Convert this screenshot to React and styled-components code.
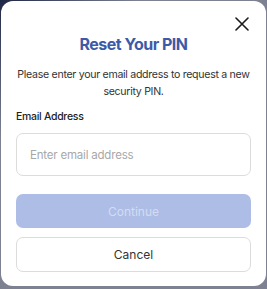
import React from "react";
import styled, { createGlobalStyle } from "styled-components";

const GlobalStyle = createGlobalStyle`
  html, body {
    margin: 0;
    padding: 0;
    background: #7e8192;
  }
  body {
    font-family: Inter, "Open Sans", sans-serif;
  }
`;

export default function App() {
    return (
        <>
            <GlobalStyle />
            <Backdrop>
                <Modal>
                    <CloseButton aria-label="Close">
                        <svg width="14" height="14" viewBox="0 0 14 14">
                            <path d="M1 1L13 13M13 1L1 13" stroke="#1a1a1a" strokeWidth="1.6" strokeLinecap="round" />
                        </svg>
                    </CloseButton>
                    <Title>Reset Your PIN</Title>
                    <Description>
                        Please enter your email address to request a new security PIN.
                    </Description>
                    <Field>
                        <Label>Email Address</Label>
                        <Input placeholder="Enter email address" />
                    </Field>
                    <Actions>
                        <Button primary disabled>Continue</Button>
                        <Button>Cancel</Button>
                    </Actions>
                </Modal>
            </Backdrop>
        </>
    );
}

const Backdrop = styled.div`
  width: 267px;
  height: 289px;
  padding: 1px 1px 3px 1px;
  box-sizing: border-box;
  background: linear-gradient(135deg, #1e2744 0%, #7e8192 25%, #7e8192 100%);
`;
const Modal = styled.div`
  position: relative;
  height: 100%;
  background: #fff;
  border-radius: 12px;
  padding: 32px 15px 0 15px;
  box-sizing: border-box;
  display: flex;
  flex-direction: column;
`;
const CloseButton = styled.button`
  position: absolute;
  top: 15px;
  right: 16px;
  width: 16px;
  height: 16px;
  padding: 0;
  border: none;
  background: none;
  display: flex;
  align-items: center;
  justify-content: center;
`;
const Title = styled.h2`
  margin: 0;
  text-align: center;
  color: #3d5aa8;
  font-size: 16px;
  font-weight: 700;
  line-height: 22px;
  letter-spacing: -0.5px;
`;
const Description = styled.p`
  margin: 11px -2px 0;
  text-align: center;
  color: #333;
  font-size: 10.6px;
  line-height: 17px;
  letter-spacing: -0.3px;
`;
const Field = styled.div`
  margin-top: 9px;
  display: flex;
  flex-direction: column;
`;
const Label = styled.label`
  color: #222;
  font-size: 10.5px;
  font-weight: 500;
  line-height: 16px;
  letter-spacing: -0.3px;
`;
const Input = styled.input`
  margin-top: 8px;
  height: 43px;
  box-sizing: border-box;
  border: 1px solid #dcdcdc;
  border-radius: 7px;
  padding: 0 13px;
  font-family: inherit;
  font-size: 11.5px;
  letter-spacing: -0.2px;
  color: #333;
  &::placeholder {
    color: #a8a8a8;
  }
`;
const Actions = styled.div`
  margin-top: 18px;
  display: flex;
  flex-direction: column;
  gap: 9px;
`;
const Button = styled.button`
  height: ${(p) => (p.primary ? "34px" : "35px")};
  border-radius: 7px;
  font-family: inherit;
  font-size: 12px;
  border: ${(p) => (p.primary ? "none" : "1px solid #dcdcdc")};
  background: ${(p) => (p.primary ? "#adbde6" : "#fff")};
  color: ${(p) => (p.primary ? "#d3dcf3" : "#333")};
`;
